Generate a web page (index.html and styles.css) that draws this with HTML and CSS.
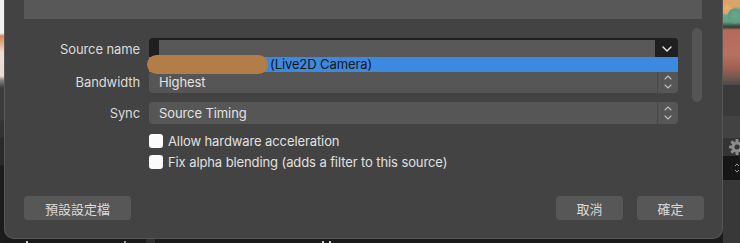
FILE: index.html
```html
<!DOCTYPE html>
<html lang="en">
<head>
<meta charset="utf-8">
<title>Properties</title>
<link rel="stylesheet" href="styles.css">
</head>
<body>
<div class="screen">
  <div class="bg-left"></div>
  <div class="dialog-col">
    <div class="dialog">
      <div class="preview"></div>
      <div class="body">
        <div class="form">
          <div class="row row-first">
            <label class="label">Source name</label>
            <div class="combo">
              <div class="combo-edit"></div>
              <div class="combo-btn">
                <svg width="10" height="6" viewBox="0 0 10 6"><path d="M1 1 L5 5 L9 1" fill="none" stroke="#e8e8e8" stroke-width="1.4" stroke-linecap="round" stroke-linejoin="round"/></svg>
              </div>
              <div class="popup">
                <span class="redact"></span>
                <span class="popup-text">(Live2D Camera)</span>
              </div>
            </div>
          </div>
          <div class="row">
            <label class="label">Bandwidth</label>
            <div class="select">
              <span class="select-text">Highest</span>
              <div class="spin">
                <svg width="8" height="16" viewBox="0 0 8 16"><path d="M1 5 L4 2 L7 5" fill="none" stroke="#bdbdbd" stroke-width="1.1" stroke-linecap="round" stroke-linejoin="round"/><path d="M1 11 L4 14 L7 11" fill="none" stroke="#bdbdbd" stroke-width="1.1" stroke-linecap="round" stroke-linejoin="round"/></svg>
              </div>
            </div>
          </div>
          <div class="row">
            <label class="label">Sync</label>
            <div class="select">
              <span class="select-text">Source Timing</span>
              <div class="spin">
                <svg width="8" height="16" viewBox="0 0 8 16"><path d="M1 5 L4 2 L7 5" fill="none" stroke="#bdbdbd" stroke-width="1.1" stroke-linecap="round" stroke-linejoin="round"/><path d="M1 11 L4 14 L7 11" fill="none" stroke="#bdbdbd" stroke-width="1.1" stroke-linecap="round" stroke-linejoin="round"/></svg>
              </div>
            </div>
          </div>
          <div class="checks">
            <label class="check"><span class="box"></span>Allow hardware acceleration</label>
            <label class="check"><span class="box"></span>Fix alpha blending (adds a filter to this source)</label>
          </div>
        </div>
        <div class="scrollbar"></div>
      </div>
      <div class="buttons">
        <button class="btn btn-wide">預設設定檔</button>
        <div class="btn-group">
          <button class="btn">取消</button>
          <button class="btn">確定</button>
        </div>
      </div>
    </div>
    <div class="below">
      <span class="tick t1"></span>
      <span class="tick t2"></span>
      <span class="block"></span>
      <span class="tick t3"></span>
      <span class="tick t4"></span>
    </div>
  </div>
  <div class="bg-right">
    <div class="art"></div>
    <div class="r1"></div>
    <div class="r2"></div>
    <div class="r3">
      <svg class="gear" width="18" height="18" viewBox="0 0 18 18"><g fill="#8c8c8c"><circle cx="9" cy="9" r="5.5"/><rect x="7.5" y="1" width="3" height="16" rx="0.8"/><rect x="1" y="7.5" width="16" height="3" rx="0.8"/><rect x="7.5" y="1" width="3" height="16" rx="0.8" transform="rotate(45 9 9)"/><rect x="7.5" y="1" width="3" height="16" rx="0.8" transform="rotate(-45 9 9)"/></g><circle cx="9" cy="9" r="2.5" fill="#343434"/></svg>
    </div>
    <div class="r4">
      <svg class="arr" width="6" height="14" viewBox="0 0 6 14"><path d="M1 5 L3 3 L5 5" fill="none" stroke="#9a9a9a" stroke-width="1"/><path d="M1 9 L3 11 L5 9" fill="none" stroke="#9a9a9a" stroke-width="1"/></svg>
    </div>
    <div class="r5"></div>
  </div>
</div>
</body>
</html>
```

FILE: styles.css
```css
* { box-sizing: border-box; }
html, body { margin: 0; padding: 0; }
body {
  width: 740px;
  height: 243px;
  overflow: hidden;
  background: #1c1c1c;
  font-family: "Inter", "Noto Sans CJK TC", sans-serif;
  font-size: 13px;
  letter-spacing: -0.1px;
  color: #dedede;
}
.screen {
  display: flex;
  width: 740px;
  height: 243px;
}
.bg-left {
  width: 4px;
  flex: none;
  background: linear-gradient(to bottom,
    #f2f2f2 0, #f2f2f2 33px,
    #d5895a 36px, #e7b89a 46px,
    #ecdcd4 52px, #e9ddd6 76px,
    #8a8480 80px, #3b3b3b 88px, #3b3b3b 120px,
    #333 121px, #333 137px, #2a2a2a 138px, #2a2a2a 165px, #1c1c1c 166px);
}
.dialog-col {
  width: 719px;
  flex: none;
  display: flex;
  flex-direction: column;
}
.dialog {
  height: 239px;
  background: #434343;
  border: 1px solid #575757;
  border-top: none;
  border-radius: 0 0 10px 10px;
  display: flex;
  flex-direction: column;
  padding: 0 19px 0 19px;
}
.below {
  flex: 1;
  background: #1a1a1a;
  display: flex;
  align-items: flex-end;
}
.tick {
  width: 2px;
  height: 2px;
  background: #cfcfcf;
  flex: none;
}
.t1 { margin-left: 22px; }
.t2 { margin-left: 96px; background: #9a9a9a; }
.block { width: 9px; height: 4px; background: #2e2e2e; margin-left: 20px; }
.t3 { margin-left: 167px; }
.t4 { margin-left: 5px; }
.preview {
  height: 19px;
  background: #585858;
  width: 678px;
}
.body {
  display: flex;
  margin-top: 9px;
  height: 150px;
}
.form {
  width: 654px;
  display: flex;
  flex-direction: column;
  padding-top: 10px;
}
.scrollbar {
  margin-left: 14px;
  width: 10px;
  height: 74px;
  background: #555;
  border-radius: 5px;
}
.row {
  display: flex;
  align-items: center;
  height: 22px;
  margin-bottom: 9px;
}
.row-first { margin-bottom: 11px; }
.label {
  width: 116px;
  text-align: right;
  margin-right: 9px;
  color: #dcdcdc;
  white-space: nowrap;
}
.combo {
  position: relative;
  width: 529px;
  height: 22px;
  background: #1f1f1f;
  border-radius: 4px 4px 0 0;
  display: flex;
  padding: 2px 0 3px 10px;
}
.combo-edit {
  flex: 1;
  background: #585858;
}
.combo-btn {
  width: 23px;
  display: flex;
  align-items: center;
  justify-content: center;
}
.popup {
  position: absolute;
  left: 0;
  top: 19px;
  width: 529px;
  height: 15px;
  background: #3e89e0;
  z-index: 2;
}
.redact {
  position: absolute;
  left: -2px;
  top: -2px;
  width: 121px;
  height: 19px;
  border-radius: 10px;
  background: #b27d48;
}
.popup-text {
  position: absolute;
  left: 121px;
  top: -1px;
  line-height: 16px;
  color: #141414;
}
.select {
  width: 529px;
  height: 22px;
  background: #565656;
  border-radius: 4px;
  display: flex;
  align-items: center;
}
.select-text {
  flex: 1;
  padding-left: 10px;
  color: #e2e2e2;
}
.spin {
  width: 21px;
  height: 22px;
  border-left: 1px solid #474747;
  display: flex;
  align-items: center;
  justify-content: center;
}
.checks {
  display: flex;
  flex-direction: column;
  padding-left: 125px;
  margin-top: -2px;
}
.check {
  display: flex;
  align-items: center;
  height: 20px;
  margin-bottom: 1px;
  color: #e0e0e0;
  white-space: nowrap;
}
.box {
  width: 14px;
  height: 14px;
  background: #fbfbfb;
  border-radius: 3px;
  margin-right: 5px;
  flex: none;
}
.buttons {
  display: flex;
  justify-content: space-between;
  margin-top: 18px;
  width: 680px;
}
.btn-group {
  display: flex;
  gap: 14px;
}
.btn {
  height: 24px;
  width: 67px;
  border: none;
  border-radius: 4px;
  background: #575757;
  color: #dadada;
  font-family: "Noto Sans CJK TC", sans-serif;
  font-size: 13px;
  letter-spacing: 0;
  padding: 0;
}
.btn-wide { width: 107px; }
.bg-right {
  flex: 1;
  display: flex;
  flex-direction: column;
  overflow: hidden;
}
.art {
  height: 85px;
  background:
    radial-gradient(circle at 12px 16px, #6aa98c 0, #5c9c80 7px, transparent 8px),
    radial-gradient(circle at 4px 8px, #e8b070 0, #e0a060 6px, transparent 7px),
    linear-gradient(to bottom, #d9a56a 0, #d9a56a 6px, #7fae8c 9px, #5f9e82 22px, #3a3a30 27px, #b36b5c 30px, #b8705f 55px, #a06050 68px, #7a5a50 76px, #4a4a4a 85px);
}
.r1 { height: 31px; background: #3a3a3a; }
.r2 { height: 22px; background: #424242; }
.r3 {
  height: 18px;
  background: #343434;
  display: flex;
  align-items: center;
  padding-left: 5px;
}
.gear { flex: none; }
.r4 {
  height: 24px;
  background: #161616;
  display: flex;
  align-items: center;
  padding-left: 11px;
}
.arr { flex: none; }
.r5 { flex: 1; background: #383838; }
```
